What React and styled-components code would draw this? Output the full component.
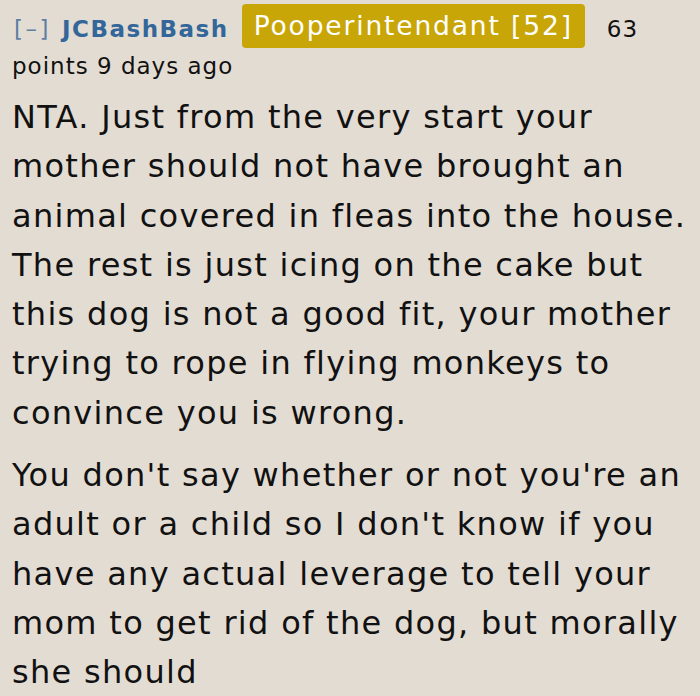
import React from "react";
import styled, { createGlobalStyle } from "styled-components";

const Global = createGlobalStyle`
  html, body { margin: 0; padding: 0; background: #e3dcd3; }
  body { font-family: "DejaVu Sans", Verdana, sans-serif; color: #111; }
`;

const Comment = styled.div`
  width: 700px;
  height: 696px;
  box-sizing: border-box;
  padding: 4px 8px 0 12px;
  overflow: hidden;
`;

const Tagline = styled.div`
  font-size: 23px;
  line-height: 37px;
  letter-spacing: 1px;
  color: #111;
`;

const Toggle = styled.span`
  color: #5f7ea3;
  letter-spacing: 2.5px;
  margin-left: 2px;
  margin-right: 11px;
`;

const Author = styled.span`
  color: #336699;
  font-weight: bold;
  letter-spacing: 1.5px;
  margin-right: 13px;
`;

const Flair = styled.span`
  display: inline-block;
  background: #c9a608;
  color: #fff;
  font-size: 26.5px;
  letter-spacing: 1.85px;
  line-height: 44px;
  padding: 0 12px;
  border-radius: 4px;
  margin-right: 22px;
  vertical-align: 2px;
`;

const Body = styled.div`
  font-size: 32px;
  letter-spacing: 1.3px;
  line-height: 49.3px;
  margin-top: 8px;
`;

const Para = styled.p`
  margin: 0 0 13px 0;
`;

export default function App() {
  return (
    <>
      <Global />
      <Comment>
        <Tagline>
          <Toggle>[–]</Toggle>
          <Author>JCBashBash</Author>
          <Flair>Pooperintendant [52]</Flair>
          63 points 9 days ago
        </Tagline>
        <Body>
          <Para>
            NTA. Just from the very start your mother should not have brought an
            animal covered in fleas into the house. The rest is just icing on the
            cake but this dog is not a good fit, your mother trying to rope in
            flying monkeys to convince you is wrong.
          </Para>
          <Para>
            You don't say whether or not you're an adult or a child so I don't
            know if you have any actual leverage to tell your mom to get rid of
            the dog, but morally she should
          </Para>
        </Body>
      </Comment>
    </>
  );
}
